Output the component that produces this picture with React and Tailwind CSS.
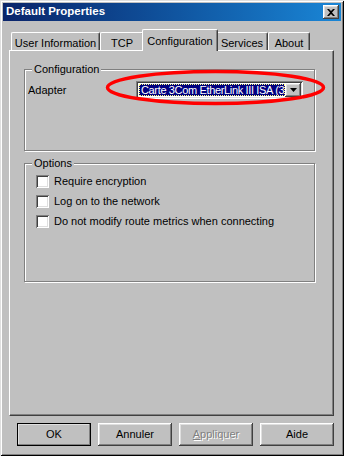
import React from "react";

const raised =
  "bg-[#c0c0c0] shadow-[inset_-1px_-1px_0_#404040,inset_1px_1px_0_#fff,inset_-2px_-2px_0_#808080,inset_2px_2px_0_#dfdfdf]";
const sunken =
  "bg-white shadow-[inset_1px_1px_0_#808080,inset_-1px_-1px_0_#fff,inset_2px_2px_0_#404040,inset_-2px_-2px_0_#dfdfdf]";

const tabs = [
  { label: "User Information", w: "w-[89px]" },
  { label: "TCP", w: "w-[44px]" },
  { label: "Configuration", w: "w-[76px]", active: true },
  { label: "Services", w: "w-[52px]" },
  { label: "About", w: "w-[42px]" },
];

const options = [
  "Require encryption",
  "Log on to the network",
  "Do not modify route metrics when connecting",
];

const Tab = ({ label, w, active }) => {
  if (active) {
    return (
      <div
        className={`${w} relative z-10 -mx-[2px] -mb-[1px] h-[22px] flex justify-center pt-[3px] bg-[#c0c0c0] border-t border-l border-white border-r border-r-[#404040] rounded-t-[2px] shadow-[inset_-1px_0_0_#808080]`}
      >
        {label}
      </div>
    );
  }
  return (
    <div
      className={`${w} h-[18px] flex justify-center pt-[2px] bg-[#c0c0c0] border-t border-l border-white border-r border-r-[#404040] rounded-t-[2px] shadow-[inset_-1px_0_0_#808080]`}
    >
      {label}
    </div>
  );
};

const GroupBox = ({ title, className, children }) => (
  <fieldset
    className={`ml-[14px] w-[291px] border border-[#808080] shadow-[1px_1px_0_#fff,inset_1px_1px_0_#fff] ${className}`}
  >
    <legend className="ml-[7px] px-[2px] bg-[#c0c0c0] leading-[13px]">{title}</legend>
    {children}
  </fieldset>
);

const Button = ({ children, isDefault, disabled }) => (
  <div
    className={`w-[74px] h-[23px] flex items-center justify-center ${raised} ${
      isDefault ? "outline outline-1 outline-black -outline-offset-1" : ""
    } ${disabled ? "text-[#808080] [text-shadow:1px_1px_0_#fff]" : ""}`}
  >
    {children}
  </div>
);

export default function App() {
  return (
    <div className="relative w-[344px] h-[456px] bg-[#c0c0c0] p-[3px] flex flex-col text-[11px] text-black font-['Liberation_Sans',Arial,sans-serif] shadow-[inset_1px_1px_0_#dfdfdf,inset_-1px_-1px_0_#000,inset_2px_2px_0_#fff,inset_-2px_-2px_0_#808080]">
      {/* title bar */}
      <div className="h-[18px] flex items-center justify-between pl-[3px] pr-[2px] bg-gradient-to-r from-[#0a246a] to-[#1a86d6]">
        <span className="text-white font-bold text-[11.5px] leading-none">Default Properties</span>
        <div className={`w-[16px] h-[14px] flex items-center justify-center ${raised}`}>
          <svg width="8" height="7" viewBox="0 0 8 7">
            <path d="M0 0h2l2 2 2-2h2L5 3.5 8 7H6L4 5 2 7H0l3-3.5z" fill="#000" />
          </svg>
        </div>
      </div>

      {/* tabs + panel */}
      <div className="mt-[8px] ml-[6px] flex flex-col">
        <div className="h-[21px] pl-[2px] flex items-end">
          {tabs.map((t) => (
            <Tab key={t.label} {...t} />
          ))}
        </div>
        <div className="w-[325px] h-[366px] pt-[12px] border-t border-l border-white border-r border-b border-r-[#404040] border-b-[#404040] shadow-[inset_-1px_-1px_0_#808080]">
          <GroupBox title="Configuration" className="h-[88px]">
            <div className="mt-[5px] pl-[3px] flex items-center h-[18px]">
              <span className="w-[108px]">Adapter</span>
              <div className={`w-[167px] h-[18px] p-[3px] pr-[2px] flex items-stretch ${sunken}`}>
                <div className="flex-1 overflow-hidden whitespace-nowrap bg-[#000080] text-white border border-dotted border-[#ffff80] leading-[10px] pl-[1px] tracking-[-0.35px]">
                  Carte 3Com EtherLink III ISA (3
                </div>
                <div className={`w-[16px] -my-[1px] flex items-center justify-center ${raised}`}>
                  <svg width="7" height="4" viewBox="0 0 7 4">
                    <path d="M0 0h7L3.5 4z" fill="#000" />
                  </svg>
                </div>
              </div>
            </div>
          </GroupBox>

          <GroupBox title="Options" className="mt-[6px] h-[125px]">
            <div className="mt-[5px] pl-[11px] flex flex-col gap-[7px]">
              {options.map((o) => (
                <div key={o} className="flex items-center h-[13px] gap-[5px]">
                  <div className={`w-[13px] h-[13px] ${sunken}`} />
                  <span>{o}</span>
                </div>
              ))}
            </div>
          </GroupBox>
        </div>
      </div>

      {/* buttons */}
      <div className="mt-[7px] pl-[14px] flex gap-[7px]">
        <Button isDefault>OK</Button>
        <Button>Annuler</Button>
        <Button disabled>
          <span>
            <span className="underline">A</span>ppliquer
          </span>
        </Button>
        <Button>Aide</Button>
      </div>

      {/* red highlight ellipse drawn over the dialog */}
      <svg
        className="absolute left-[104px] top-[68px] pointer-events-none"
        width="224"
        height="40"
        viewBox="0 0 224 40"
      >
        <ellipse cx="111.5" cy="19.5" rx="108" ry="16" fill="none" stroke="#f00" strokeWidth="3.5" />
      </svg>
    </div>
  );
}
